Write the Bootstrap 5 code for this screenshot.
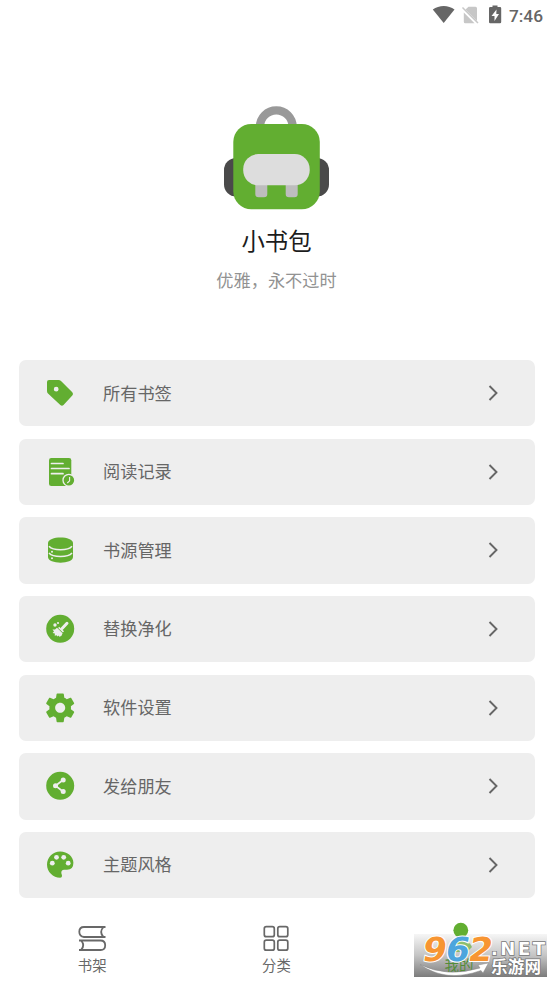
<!DOCTYPE html>
<html lang="zh-CN">
<head>
<meta charset="utf-8">
<meta name="viewport" content="width=device-width, initial-scale=1">
<title>小书包</title>
<link href="https://cdn.jsdelivr.net/npm/bootstrap@5.3.0/dist/css/bootstrap.min.css" rel="stylesheet">
<style>
body{font-family:"Noto Sans CJK SC","Noto Sans",sans-serif;background:#fff;color:#666;height:983px;overflow:hidden}
svg{display:block;flex:none}
.status{height:30px;padding-right:10px}
.clock{font:500 17.3px/30px Roboto,sans-serif;color:#666;margin-left:7px;padding-top:1px}
.hero{height:330px;padding-top:76px}
.app-name{font-size:23.4px;line-height:34px;color:#1c1c1c;font-weight:400;margin-top:13px}
.motto{font-size:17.2px;line-height:26px;color:#929292;margin-top:10px}
.menu{padding:0 18.5px;gap:12.35px}
.entry{height:66.3px;border-radius:7px;background:#eee;padding:0 34.5px 0 25.5px;color:#666;font-size:17.2px;text-decoration:none}
.entry span{margin-left:27px;padding-bottom:1.4px}
.green{fill:#62ae31}
.tabs{margin-top:18px;height:67px}
.tab{font-size:14.4px;line-height:20px;color:#686868}
.tab svg{margin-top:7px;margin-bottom:2px}
.watermark{right:6px;bottom:6px}
</style>
</head>
<body class="position-relative">
<header class="status d-flex justify-content-end align-items-center">
  <svg width="70" height="30" viewBox="432 0 70 30">
    <path fill="#666" d="M432.800 9.500C439 4.800 448.500 4.800 454.500 9.500L443.700 23z"/>
    <path fill="#c7c7c7" d="M468.500 6.800H475.500Q477 6.800 477 8.300V21L465.500 9.500zM463.800 12.600L474.500 23.300H465.300Q463.800 23.300 463.800 21.800z"/>
    <path stroke="#c7c7c7" stroke-width="1.500" d="M462.500 7.500L478 23"/>
    <path fill="#666" d="M492.500 5.500H497.500V7H500Q501.200 7 501.200 8.200V22Q501.200 23.300 500 23.300H490.200Q489 23.300 489 22V8.200Q489 7 490.200 7H492.500z"/>
    <path fill="#fff" d="M496.500 9.500L491.500 16H494.500V21L499 14H496.300z"/>
  </svg>
  <span class="clock">7:46</span>
</header>
<section class="hero d-flex flex-column align-items-center">
  <svg width="106" height="104" viewBox="224 106 106 104">
    <circle cx="276.300" cy="126.700" r="16.300" fill="none" stroke="#999" stroke-width="8.300"/>
    <rect x="224" y="158" width="105" height="38.500" rx="12" fill="#4a4a4a"/>
    <rect x="233.300" y="124" width="86.500" height="85.300" rx="18" fill="#62ae31"/>
    <path fill="#bdbdbd" d="M255.300 180h12v14q0 3.300-3.300 3.300h-5.400q-3.300 0-3.300-3.300zM285.700 180h12v14q0 3.300-3.300 3.300h-5.400q-3.300 0-3.300-3.300z"/>
    <rect x="243.200" y="154" width="66.500" height="31.300" rx="15" fill="#ddd"/>
  </svg>
  <h1 class="app-name mb-0">小书包</h1>
  <p class="motto mb-0">优雅，永不过时</p>
</section>
<main class="menu d-flex flex-column">
  <a class="entry d-flex align-items-center" href="#">
    <svg class="green" width="32" height="32" viewBox="0 0 32 32"><path fill-rule="evenodd" d="M5 3H14.500Q16 3 17 4L28.300 15.300Q29.800 17 28.300 18.500L19.500 28Q18 29.500 16.300 28L4 16.500Q3 15.500 3 14V5Q3 3 5 3zM12.200 9.800a2.400 2.400 0 1 0 0 4.800a2.400 2.400 0 1 0 0-4.800z"/></svg>
    <span>所有书签</span><svg class="ms-auto" width="14" height="20" viewBox="0 0 14 20"><path d="M3.500 3L10.500 10L3.500 17" fill="none" stroke="#666" stroke-width="1.900"/></svg>
  </a>
  <a class="entry d-flex align-items-center" href="#">
    <svg class="green" width="32" height="32" viewBox="0 0 32 32"><rect x="5" y="2" width="22.300" height="28" rx="2.300"/><path d="M7.500 7.500H19M7.500 12.500H25M7.500 17.700H19" stroke="#eee" stroke-width="1.700" stroke-linecap="round"/><circle cx="24.900" cy="24.200" r="5.900" stroke="#eee" stroke-width="1.300"/><path d="M25.600 21V24.800L23.300 27" fill="none" stroke="#eee" stroke-width="1.100"/></svg>
    <span>阅读记录</span><svg class="ms-auto" width="14" height="20" viewBox="0 0 14 20"><path d="M3.500 3L10.500 10L3.500 17" fill="none" stroke="#666" stroke-width="1.900"/></svg>
  </a>
  <a class="entry d-flex align-items-center" href="#">
    <svg class="green" width="32" height="32" viewBox="0 0 32 32"><path d="M4 9C4 1.500 29 1.500 29 9V23C29 30.500 4 30.500 4 23z"/><path d="M5 12.300C9 17 24 17 28 12.300M5 19C9 23.700 24 23.700 28 19" fill="none" stroke="#eee" stroke-width="1.500"/><circle cx="8" cy="17.800" r="1" fill="#eee"/><circle cx="8" cy="24.200" r="1" fill="#eee"/></svg>
    <span>书源管理</span><svg class="ms-auto" width="14" height="20" viewBox="0 0 14 20"><path d="M3.500 3L10.500 10L3.500 17" fill="none" stroke="#666" stroke-width="1.900"/></svg>
  </a>
  <a class="entry d-flex align-items-center" href="#">
    <svg class="green" width="32" height="32" viewBox="0 0 32 32"><circle cx="16.200" cy="15.800" r="14"/><path d="M23 10.300L18.300 15.300" stroke="#eee" stroke-width="3" stroke-linecap="round"/><path d="M15.200 13.800L20 18.200L18.900 19.500L14.100 15z" fill="#eee"/><path fill="#eee" d="M13 14.800L18.600 20.200Q18 23.300 15.300 23.800L14.600 22.500L13.500 23.500L12.600 22.200L10.700 22.700L10.900 20.600L8.600 20L10 18.400L8.500 16.600L11 16.400z"/><circle cx="11" cy="12" r="1.700" fill="#eee"/><circle cx="14" cy="10" r="1.100" fill="#eee"/></svg>
    <span>替换净化</span><svg class="ms-auto" width="14" height="20" viewBox="0 0 14 20"><path d="M3.500 3L10.500 10L3.500 17" fill="none" stroke="#666" stroke-width="1.900"/></svg>
  </a>
  <a class="entry d-flex align-items-center" href="#">
    <svg class="green" width="32" height="32" viewBox="0 0 32 32"><path transform="translate(-1.100 -1.500) scale(1.440)" d="M19.430 12.980c.04-.32.070-.64.070-.98s-.03-.66-.07-.98l2.110-1.650c.19-.15.24-.42.12-.64l-2-3.460c-.12-.22-.39-.3-.61-.22l-2.490 1c-.52-.4-1.080-.73-1.690-.98l-.38-2.650C14.460 2.180 14.250 2 14 2h-4c-.25 0-.46.180-.49.420l-.38 2.650c-.61.250-1.170.590-1.690.980l-2.490-1c-.23-.09-.49 0-.61.220l-2 3.460c-.13.220-.07.490.120.640l2.110 1.650c-.04.320-.07.650-.07.980s.030.660.070.980l-2.110 1.650c-.19.150-.24.420-.12.640l2 3.460c.12.220.390.300.610.220l2.490-1c.52.400 1.080.730 1.690.980l.38 2.650c.03.240.240.420.490.420h4c.25 0 .46-.18.490-.42l.38-2.650c.61-.25 1.170-.59 1.690-.98l2.490 1c.23.090.490 0 .610-.22l2-3.460c.12-.22.070-.49-.12-.64l-2.110-1.650zM12 15.500c-1.930 0-3.500-1.570-3.500-3.500s1.570-3.500 3.500-3.500 3.500 1.570 3.500 3.500-1.570 3.500-3.500 3.500z"/></svg>
    <span>软件设置</span><svg class="ms-auto" width="14" height="20" viewBox="0 0 14 20"><path d="M3.500 3L10.500 10L3.500 17" fill="none" stroke="#666" stroke-width="1.900"/></svg>
  </a>
  <a class="entry d-flex align-items-center" href="#">
    <svg class="green" width="32" height="32" viewBox="0 0 32 32"><circle cx="16.200" cy="15.800" r="14"/><path d="M19 10L11.500 15.800L19 21.500" fill="none" stroke="#eee" stroke-width="1.700"/><g fill="#eee"><circle cx="19.200" cy="10" r="2.500"/><circle cx="11.500" cy="15.800" r="2.500"/><circle cx="19.200" cy="21.500" r="2.500"/></g></svg>
    <span>发给朋友</span><svg class="ms-auto" width="14" height="20" viewBox="0 0 14 20"><path d="M3.500 3L10.500 10L3.500 17" fill="none" stroke="#666" stroke-width="1.900"/></svg>
  </a>
  <a class="entry d-flex align-items-center" href="#">
    <svg class="green" width="32" height="32" viewBox="0 0 32 32"><path d="M16.200 2.500C9 2.500 3 8.300 3 15.600S9 28.800 16.200 28.800Q18 28.800 18 27C18 25.500 17.300 25 17.300 23.500Q17.500 20.800 20 20.800H23Q29.400 20.800 29.400 13.800C29.400 7.500 23.500 2.500 16.200 2.500z"/><g fill="#eee"><circle cx="8.300" cy="14.200" r="2.400"/><circle cx="12.500" cy="8.300" r="2.400"/><circle cx="19.700" cy="8.300" r="2.400"/><circle cx="24.200" cy="14.200" r="2.400"/></g></svg>
    <span>主题风格</span><svg class="ms-auto" width="14" height="20" viewBox="0 0 14 20"><path d="M3.500 3L10.500 10L3.500 17" fill="none" stroke="#666" stroke-width="1.900"/></svg>
  </a>
</main>
<nav class="tabs row g-0 text-center">
  <div class="tab col d-flex flex-column align-items-center">
    <svg width="30" height="30" viewBox="77 923 30 30" fill="none" stroke="#686868" stroke-width="1.800"><path d="M105.500 927H84Q79.300 927 79.300 931.800T84 937H105.500M103.500 927Q98.800 932 103.500 937M79 940.500H100.500Q105.200 940.500 105.200 945.300T100.500 950H79M81 940.500Q85.500 945.200 81 950"/></svg>书架</div>
  <div class="tab col d-flex flex-column align-items-center">
    <svg width="30" height="30" viewBox="261.500 923 30 30" fill="none" stroke="#686868" stroke-width="1.700"><rect x="264.800" y="926.700" width="10" height="10" rx="2"/><rect x="278.300" y="926.700" width="10" height="10" rx="2"/><rect x="264.800" y="940.200" width="10" height="10" rx="2"/><rect x="278.300" y="940.200" width="10" height="10" rx="2"/></svg>分类</div>
  <div class="col"></div>
</nav>
<aside class="watermark position-absolute">
  <svg width="133" height="57" viewBox="414 920 133 57">
    <defs><linearGradient id="shade" x2="0" y2="1"><stop stop-color="#f6f6f6"/><stop offset=".5" stop-color="#c4c4c4"/><stop offset="1" stop-color="#7c7c7c"/></linearGradient></defs>
    <rect x="414" y="934" width="133" height="43" fill="url(#shade)"/>
    <g fill="#62ae31"><circle cx="460.800" cy="930.200" r="7.400"/><path d="M453 947Q453 940 461 940T472 947L467 952H453z" opacity=".65"/></g>
    <text x="444.500" y="970.500" font-size="14.400" font-family="Noto Sans CJK SC,sans-serif" fill="#528c38">我的</text>
    <path d="M420 964.500Q447 978 480 968L478 965L488.500 963L483 973L481 970.500Q446 983 420 964.500z" fill="#fff" stroke="#888" stroke-width=".5"/>
    <g font-family="DejaVu Sans,sans-serif" font-weight="700" font-size="33" stroke="#fff" stroke-width="2" paint-order="stroke" transform="translate(421 961) skewX(-10)">
      <text textLength="24" lengthAdjust="spacingAndGlyphs" fill="#f79532">9</text>
      <text x="23" textLength="24" lengthAdjust="spacingAndGlyphs" fill="#4da5dd">6</text>
      <text x="46" textLength="24" lengthAdjust="spacingAndGlyphs" fill="#f79532">2</text>
    </g>
    <g fill="#fff" stroke="#777" stroke-width="1.500" paint-order="stroke" font-weight="700">
      <text x="491" y="955" font-family="DejaVu Sans,sans-serif" font-size="18" textLength="54">.NET</text>
      <text x="491" y="973" font-family="Noto Sans CJK SC,sans-serif" font-size="16.500" textLength="50">乐游网</text>
    </g>
  </svg>
</aside>
<script src="https://cdn.jsdelivr.net/npm/bootstrap@5.3.0/dist/js/bootstrap.bundle.min.js"></script>
</body>
</html>
